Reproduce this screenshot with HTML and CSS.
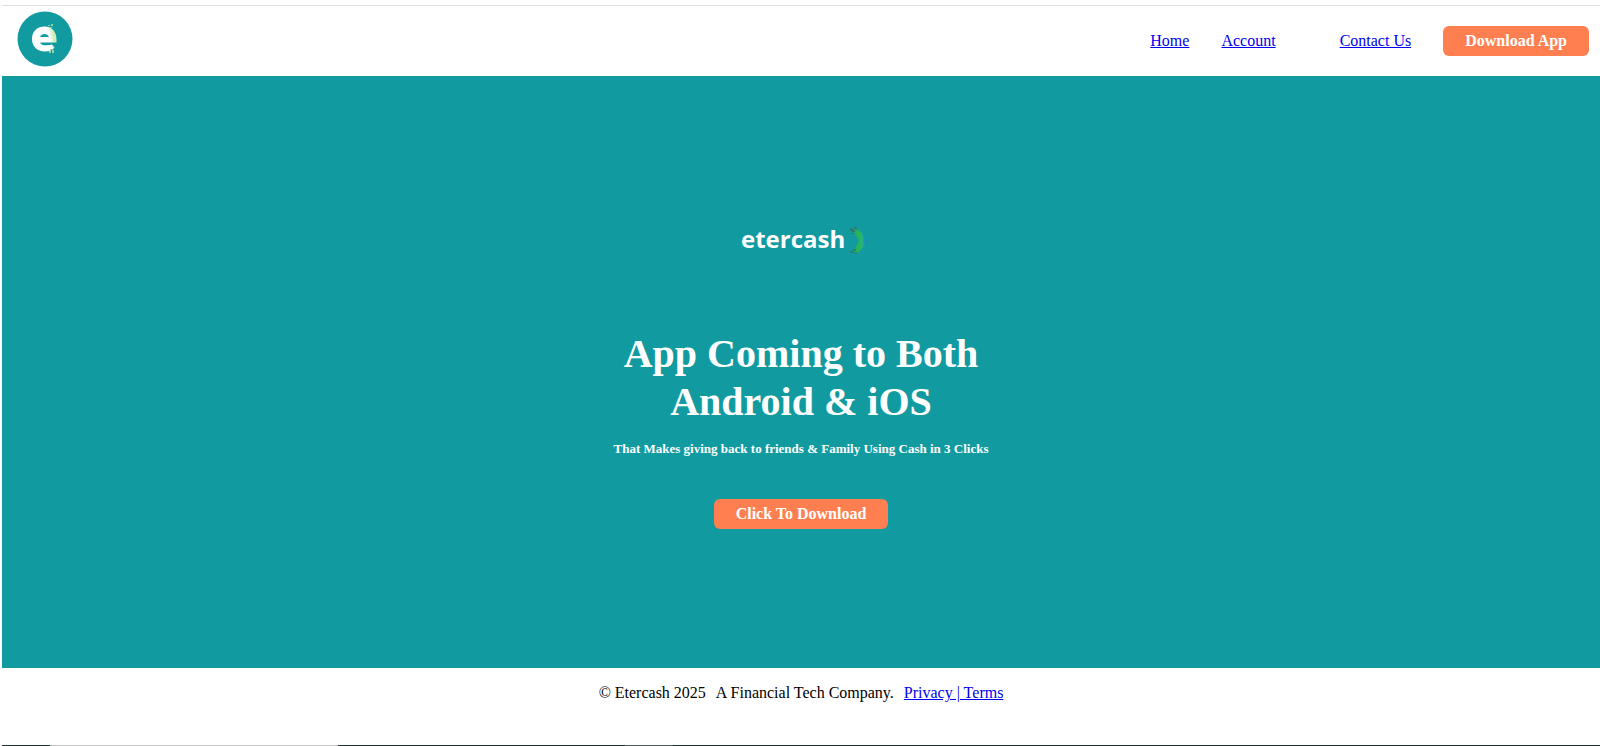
FILE: index.html
```html
<!DOCTYPE html>
<html lang="en">
<head>
  <meta charset="UTF-8">
  <meta name="viewport" content="width=device-width, initial-scale=1.0">
  <title>Etercash</title>
  <link rel="stylesheet" href="styles.css">
</head>
<body>
  <!-- Header -->
  <header class="header">
    <svg class="logo" viewBox="0 0 56 56" role="img" aria-label="Etercash">
      <defs>
        <linearGradient id="fade" x1="0" x2="1" y1="0.2" y2="0">
          <stop offset="0.65" stop-color="#ffffff"/>
          <stop offset="0.8" stop-color="#cdeebd"/>
        </linearGradient>
      </defs>
      <circle cx="28" cy="28" r="27.5" fill="#119ba1"/>
      <path d="M27.500 15.500C19.500 15.500 15 21 15 28C15 35.500 20 40.500 28 40.500C32 40.500 35 39.500 37.500 36.500L35 33.500C30 35 24 34.500 23 31.500L39.500 31.500L39.500 29C39.500 21 35.500 15.500 27.500 15.500ZM23 26C24.500 22 30.500 22 32 26Z" fill="url(#fade)" fill-rule="evenodd"/>
      <path d="M31 14h2v1h-2zM34 13h2v2h-2zM33 16h2v1h-2zM32 40h2v2h-2zM35 39h2v3h-2zM33 38h3v1h-3zM36 37h1v1h-1z" fill="#8fd0a8"/>
    </svg>
    <nav class="menu">
      <a href="#">Home</a>
      <a href="#" class="account">Account</a>
      <a href="#">Contact Us</a>
      <button class="btn">Download App</button>
    </nav>
  </header>

  <!-- Hero -->
  <main class="hero">
    <svg class="wordmark" viewBox="0 0 134 46" role="img" aria-label="etercash">
      <defs>
        <linearGradient id="arrow" x1="0" x2="1">
          <stop offset="0.2" stop-color="#2bb04f"/>
          <stop offset="0.6" stop-color="#25b574"/>
          <stop offset="0.85" stop-color="#1689c4"/>
        </linearGradient>
      </defs>
      <text class="wordmark-text" x="7" y="30">etercash</text>
      <path d="M119 12h6l9 11-9 11h-6l6-11z" fill="url(#arrow)"/>
      <path d="M116 10h3v2h2v2h-3v-1h-2zM117 15h3v1h-3zM120 9h3v2h-3zM116 33h3v-2h3v2h-2v2h-4zM120 35h3v1h-3z" fill="#257f72"/>
    </svg>
    <h1>App Coming to Both<br>Android &amp; iOS</h1>
    <h5>That Makes giving back to friends &amp; Family Using Cash in 3 Clicks</h5>
    <button class="btn">Click To Download</button>
  </main>

  <!-- Footer -->
  <footer class="footer">
    <span>© Etercash 2025</span>
    <span>A Financial Tech Company.</span>
    <a href="#">Privacy | Terms</a>
  </footer>
  <div class="strip"></div>
</body>
</html>
```

FILE: styles.css
```css
* {
  box-sizing: border-box;
}

body {
  margin: 0;
  padding: 5px 0 0 2px;
  min-height: 100vh;
  display: flex;
  flex-direction: column;
  font-family: "Liberation Serif", "Times New Roman", serif;
  font-size: 16px;
  background-color: #fff;
}

a {
  color: #0000ee;
}

.header {
  display: flex;
  justify-content: space-between;
  align-items: center;
  padding: 5px 11px 9px 15px;
  border-top: 1px solid #e0e0e0;
}

.logo {
  width: 56px;
  height: 56px;
}

.menu {
  display: flex;
  align-items: center;
  gap: 32px;
  padding-top: 3px;
}

.account {
  margin-right: 32px;
}

.btn {
  padding: 6px 22px;
  border: none;
  border-radius: 6px;
  background-color: coral;
  color: #fff;
  font-family: inherit;
  font-size: 16px;
  font-weight: bold;
}

.hero {
  flex: 1;
  display: flex;
  flex-direction: column;
  align-items: center;
  padding: 142px 20px 120px;
  background-color: #119ba1;
  color: #fff;
  text-align: center;
}

.wordmark {
  width: 134px;
  height: 46px;
}

.wordmark-text {
  font-family: "Open Sans", sans-serif;
  font-size: 24px;
  font-weight: bold;
  fill: #fff;
}

.hero h1 {
  margin: 66px 0 15px;
  font-size: 40px;
  line-height: 48px;
}

.hero h5 {
  margin: 0 0 42px;
  font-size: 13px;
}

.footer {
  display: flex;
  justify-content: center;
  gap: 10px;
  padding: 16px 0 43px;
}

.strip {
  height: 1px;
  background: linear-gradient(to right, #22332f 3%, #c0c0c0 3% 21%, #22332f 21% 39%, #4f5b58 39% 42%, #22332f 42%);
}
```
